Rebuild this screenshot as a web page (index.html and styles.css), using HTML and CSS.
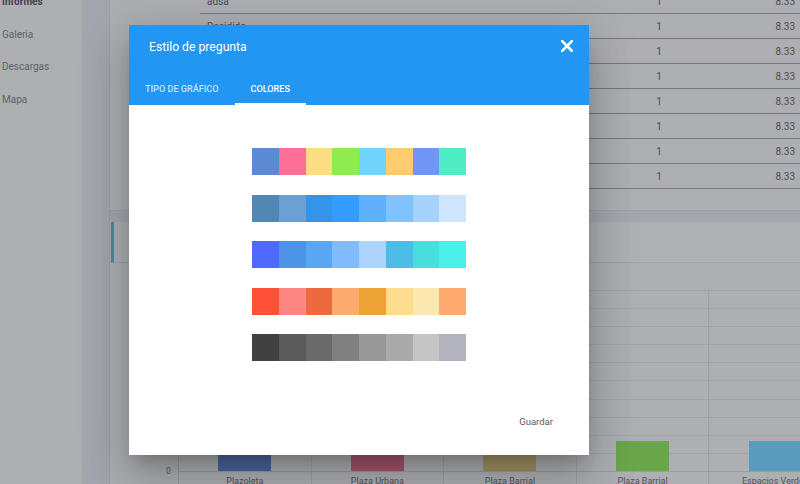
FILE: index.html
```html
<!DOCTYPE html>
<html lang="es">
<head>
<meta charset="utf-8">
<title>Estilo de pregunta</title>
<link rel="stylesheet" href="styles.css">
</head>
<body>
<div class="page">
  <nav class="sidebar">
    <a class="nav-item active">Informes</a>
    <a class="nav-item">Galeria</a>
    <a class="nav-item">Descargas</a>
    <a class="nav-item">Mapa</a>
  </nav>
  <div class="strip"></div>
  <main class="main">
    <section class="table-card">
      <div class="table">
        <div class="row"><span class="c-name">adsa</span><span class="c-count">1</span><span class="c-pct">8.33</span></div>
        <div class="row"><span class="c-name">Decidido</span><span class="c-count">1</span><span class="c-pct">8.33</span></div>
        <div class="row"><span class="c-name">Opción 3</span><span class="c-count">1</span><span class="c-pct">8.33</span></div>
        <div class="row"><span class="c-name">Opción 4</span><span class="c-count">1</span><span class="c-pct">8.33</span></div>
        <div class="row"><span class="c-name">Opción 5</span><span class="c-count">1</span><span class="c-pct">8.33</span></div>
        <div class="row"><span class="c-name">Opción 6</span><span class="c-count">1</span><span class="c-pct">8.33</span></div>
        <div class="row"><span class="c-name">Opción 7</span><span class="c-count">1</span><span class="c-pct">8.33</span></div>
        <div class="row"><span class="c-name">Opción 8</span><span class="c-count">1</span><span class="c-pct">8.33</span></div>
      </div>
    </section>
    <div class="band"></div>
    <div class="question-box"></div>
    <section class="chart">
      <span class="y-label">0</span>
      <div class="plot">
        <div class="col"><div class="bar bar-1"></div><span class="x-label">Plazoleta</span></div>
        <div class="col"><div class="bar bar-2"></div><span class="x-label">Plaza Urbana</span></div>
        <div class="col"><div class="bar bar-3"></div><span class="x-label">Plaza Barrial</span></div>
        <div class="col"><div class="bar bar-4"></div><span class="x-label">Plaza Barrial</span></div>
        <div class="col"><div class="bar bar-5"></div><span class="x-label">Espacios Verdes</span></div>
      </div>
    </section>
  </main>
</div>

<div class="dialog" role="dialog">
  <header class="dialog-header">
    <div class="title-row">
      <h2 class="dialog-title">Estilo de pregunta</h2>
      <button class="close" aria-label="Cerrar">
        <svg width="12" height="12" viewBox="0 0 12 12"><path d="M1 1 L11 11 M11 1 L1 11" stroke="#fff" stroke-width="2.6" stroke-linecap="square"/></svg>
      </button>
    </div>
    <div class="tabs">
      <div class="tab">TIPO DE GRÁFICO</div>
      <div class="tab tab-active">COLORES</div>
    </div>
  </header>
  <div class="dialog-body">
    <div class="palettes">
      <div class="palette">
        <span class="sw" style="background:#5c89d4"></span><span class="sw" style="background:#fe6f95"></span><span class="sw" style="background:#fcdd82"></span><span class="sw" style="background:#8eec4f"></span><span class="sw" style="background:#72d3fd"></span><span class="sw" style="background:#fecb6f"></span><span class="sw" style="background:#7095f4"></span><span class="sw" style="background:#4eedc6"></span>
      </div>
      <div class="palette">
        <span class="sw" style="background:#5287b4"></span><span class="sw" style="background:#6aa1d3"></span><span class="sw" style="background:#3493ea"></span><span class="sw" style="background:#339cff"></span><span class="sw" style="background:#5eb0fe"></span><span class="sw" style="background:#80c2fe"></span><span class="sw" style="background:#a5d2fe"></span><span class="sw" style="background:#cde5fd"></span>
      </div>
      <div class="palette">
        <span class="sw" style="background:#5069ff"></span><span class="sw" style="background:#4d94e8"></span><span class="sw" style="background:#59a7f2"></span><span class="sw" style="background:#7fbbfd"></span><span class="sw" style="background:#acd4fe"></span><span class="sw" style="background:#4cbde9"></span><span class="sw" style="background:#48dedb"></span><span class="sw" style="background:#4af0e7"></span>
      </div>
      <div class="palette">
        <span class="sw" style="background:#ff5038"></span><span class="sw" style="background:#ff8783"></span><span class="sw" style="background:#ec6a3e"></span><span class="sw" style="background:#fdaa6e"></span><span class="sw" style="background:#eda335"></span><span class="sw" style="background:#fedc8d"></span><span class="sw" style="background:#fee8b2"></span><span class="sw" style="background:#fea96e"></span>
      </div>
      <div class="palette">
        <span class="sw" style="background:#414141"></span><span class="sw" style="background:#5a5a5a"></span><span class="sw" style="background:#6a6a6a"></span><span class="sw" style="background:#808080"></span><span class="sw" style="background:#989898"></span><span class="sw" style="background:#aaaaaa"></span><span class="sw" style="background:#c5c5c5"></span><span class="sw" style="background:#b3b3bd"></span>
      </div>
    </div>
  </div>
  <div class="dialog-actions">
    <button class="btn-save">Guardar</button>
  </div>
</div>
</body>
</html>
```

FILE: styles.css
```css
* { box-sizing: border-box; }
html, body { margin: 0; padding: 0; }
body {
  width: 800px;
  height: 484px;
  overflow: hidden;
  font-family: Roboto, "Liberation Sans", sans-serif;
  background: #aeafb3;
  position: relative;
}

.page {
  display: grid;
  grid-template-columns: 82px 28px minmax(0, 1fr);
  height: 484px;
}

/* sidebar */
.sidebar {
  background: #aeafb3;
  display: flex;
  flex-direction: column;
  margin-top: -6px;
}
.nav-item {
  display: block;
  height: 32.5px;
  line-height: 16px;
  padding-left: 2px;
  font-size: 10px;
  color: #5d616b;
}
.nav-item.active { font-weight: 700; color: #3f434c; }

.strip {
  background: #a4a6ad;
  border-right: 1px solid #9d9fa6;
}

/* main */
.main {
  display: flex;
  flex-direction: column;
  background: #aeafb3;
  min-width: 0;
  overflow: hidden;
}
.table-card {
  height: 210px;
  padding-left: 90px;
  overflow: hidden;
  flex: none;
}
.table { margin-top: -11px; }
.row {
  display: flex;
  align-items: center;
  height: 25px;
  border-bottom: 1px solid #707789;
  font-size: 10px;
  color: #4b4e58;
}
.c-name { flex: 1; padding-left: 7px; }
.c-count { width: 40px; text-align: center; margin-right: 61px; }
.c-pct { width: 60px; text-align: right; padding-right: 5px; }

.band {
  flex: none;
  height: 12px;
  background: #a5a7ae;
  border-top: 1px solid #9fa1a8;
}
.question-box {
  flex: none;
  height: 41px;
  margin-left: 1px;
  border-left: 3px solid #4a8e9b;
  border-bottom: 1px solid #a0a2a8;
  background: #afb0b4;
}

.chart {
  flex: 1;
  display: flex;
  padding-left: 56px;
  padding-top: 27px;
}
.y-label {
  width: 12px;
  flex: none;
  font-size: 8.5px;
  color: #55585f;
  align-self: flex-start;
  margin-top: 176px;
}
.plot {
  flex: none;
  display: grid;
  grid-template-columns: repeat(5, 132.6px);
  height: 186px;
  background: repeating-linear-gradient(to bottom, #a2a4aa 0 1px, transparent 1px 18.1px);
  background-size: 100% 182px;
  background-repeat: no-repeat;
  position: relative;
}
.plot::after {
  content: "";
  position: absolute;
  left: 0; right: 0;
  top: 181px;
  height: 1px;
  background: #9a9ca3;
}
.col {
  border-left: 1px solid #9fa1a7;
  display: flex;
  flex-direction: column;
  align-items: center;
}
.col:first-child { border-left-color: #9a9ca3; }
.bar {
  width: 53px;
  height: 30px;
  margin-top: 151px;
}
.bar-1 { background: #4a679e; }
.bar-2 { background: #a6566f; }
.bar-3 { background: #a39463; }
.bar-4 { background: #6aa64c; }
.bar-5 { background: #5a9abd; }
.x-label {
  margin-top: 5px;
  font-size: 9px;
  color: #50535a;
  white-space: nowrap;
}

/* dialog */
.dialog {
  position: absolute;
  left: 129px;
  top: 25px;
  width: 460px;
  height: 430px;
  background: #fff;
  display: flex;
  flex-direction: column;
  box-shadow: 0 11px 15px -7px rgba(0,0,0,.2), 0 24px 38px 3px rgba(0,0,0,.14), 0 9px 46px 8px rgba(0,0,0,.12);
}
.dialog-header {
  background: #2196f3;
  height: 80px;
  display: flex;
  flex-direction: column;
}
.title-row {
  display: flex;
  justify-content: space-between;
  align-items: flex-start;
  height: 48px;
  padding: 14px 14px 0 20px;
}
.dialog-title {
  margin: 0;
  font-size: 12.2px;
  line-height: 16px;
  font-weight: 400;
  color: #fff;
}
.close {
  border: 0;
  background: transparent;
  padding: 0;
  width: 16px;
  height: 16px;
  display: flex;
  align-items: center;
  justify-content: center;
  margin-top: -1px;
}
.tabs {
  display: flex;
  height: 32px;
}
.tab {
  padding: 2px 16px 0;
  display: flex;
  align-items: center;
  font-size: 9.1px;
  font-weight: 500;
  color: rgba(255,255,255,.75);
  border-bottom: 2px solid transparent;
}
.tab-active {
  color: #fff;
  border-bottom-color: #fff;
}

.dialog-body {
  flex: 1;
  display: flex;
  justify-content: center;
  padding-top: 43px;
}
.palettes {
  width: 214px;
  display: flex;
  flex-direction: column;
  gap: 19.5px;
}
.palette {
  display: flex;
  height: 27px;
}
.sw { flex: 1; }

.dialog-actions {
  display: flex;
  justify-content: flex-end;
  padding: 0 20px 16px 0;
}
.btn-save {
  min-width: 64px;
  height: 36px;
  border: 0;
  background: transparent;
  font-family: Roboto, "Liberation Sans", sans-serif;
  font-size: 9.5px;
  color: #5a5d66;
  padding: 0 16px;
}
```
